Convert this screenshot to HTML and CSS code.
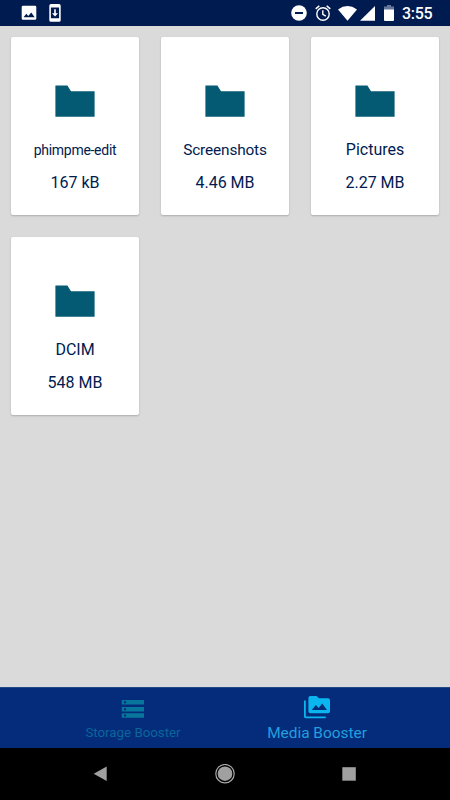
FILE: index.html
```html
<!DOCTYPE html>
<html lang="en">
<head>
<meta charset="utf-8">
<title>Media Booster</title>
<link rel="stylesheet" href="styles.css">
</head>
<body>
<svg class="defs" aria-hidden="true">
  <symbol id="folder" viewBox="0 0 40 32"><path d="M.4 .5H12.4L16 6.2H39.6V31.8H.4Z"/></symbol>
</svg>
<div class="screen">
  <header class="status">
    <div class="notifications">
      <svg width="16" height="16" viewBox="0 0 16 16"><path fill="#fff" fill-rule="evenodd" d="M2 .8H14Q15.3.8 15.3 2.1V13.5Q15.3 14.8 14 14.8H2Q.7 14.8.7 13.5V2.1Q.7.8 2 .8ZM2.6 12.2H13.7L10.2 7.5 7.3 11.1 5.3 8.8Z"/></svg>
      <svg width="12" height="18" viewBox="0 0 12 18"><path fill="#fff" fill-rule="evenodd" d="M2 0H10Q11.7 0 11.7 1.7V16.2Q11.7 17.8 10 17.8H2Q.3 17.8.3 16.2V1.7Q.3 0 2 0ZM1.9 3.5V14.3H10.1V3.5Z"/><path fill="#fff" d="M5.2 5.2H6.8V9.3H9L6 12.4 3 9.3H5.2Z"/></svg>
    </div>
    <div class="system">
      <svg class="dnd" width="16" height="16" viewBox="0 0 16 16"><circle cx="8" cy="8" r="7.8" fill="#fff"/><path d="M4 8H12" stroke="#001b50" stroke-width="2"/></svg>
      <svg class="alarm" width="16" height="17" viewBox="0 0 16 17" fill="none" stroke="#fff" stroke-width="1.4"><circle cx="8" cy="9" r="6.2"/><path d="M.7 3.9 4.3 .9M15.3 3.9 11.7 .9M7.8 5.3V9.4L10.8 11.2"/></svg>
      <svg class="wifi" width="19" height="15" viewBox="0 0 19 15"><path fill="#fff" d="M0 3.4Q9.5-3.3 19 3.4L9.5 14.8Z"/></svg>
      <svg class="signal" width="15" height="15" viewBox="0 0 15 15"><path fill="#fff" d="M15 0V14.8H0Z"/></svg>
      <svg class="battery" width="10" height="16" viewBox="0 0 10 16"><path fill="#65769a" d="M3 0H7V1.6H10V5H0V1.6H3Z"/><path fill="#fff" d="M0 4.5H10V15Q10 16 9 16H1Q0 16 0 15Z"/></svg>
      <span class="clock">3:55</span>
    </div>
  </header>
  <main class="grid">
    <article class="card"><svg class="folder"><use href="#folder"/></svg><h2 class="name name-long">phimpme-edit</h2><p class="size">167 kB</p></article>
    <article class="card"><svg class="folder"><use href="#folder"/></svg><h2 class="name name-medium">Screenshots</h2><p class="size">4.46 MB</p></article>
    <article class="card"><svg class="folder"><use href="#folder"/></svg><h2 class="name">Pictures</h2><p class="size">2.27 MB</p></article>
    <article class="card"><svg class="folder"><use href="#folder"/></svg><h2 class="name">DCIM</h2><p class="size">548 MB</p></article>
  </main>
  <nav class="tabs">
    <div class="tab storage">
      <svg width="24" height="20" viewBox="0 0 24 20"><path fill="currentColor" d="M.8 1H23V5.6H.8ZM.8 8H23V12.4H.8ZM.8 14.2H23V18.8H.8Z"/><path fill="#042c7a" d="M3 2.3H5V4.3H3ZM3 9.2H5V11.2H3ZM3 15.5H5V17.5H3Z"/></svg>
      <span>Storage Booster</span>
    </div>
    <div class="tab media">
      <svg width="28" height="24" viewBox="0 0 28 24"><path fill="none" stroke="currentColor" stroke-width="1.8" d="M1.9 4.5V20.5Q1.9 21.3 2.7 21.3H22.8"/><path fill="currentColor" fill-rule="evenodd" d="M7.4 0H13.5L16 2.2H25Q27 2.2 27 4.2V15.2Q27 17.2 25 17.2H7.4Q5.4 17.2 5.4 15.2V2Q5.4 0 7.4 0ZM8.8 14H24L19.2 7.6 15.7 12 12.8 8.9Z"/></svg>
      <span>Media Booster</span>
    </div>
  </nav>
  <footer class="navigation">
    <svg width="14" height="16" viewBox="0 0 14 16"><path fill="#a0a0a0" d="M13.7.5V15L.7 7.8Z"/></svg>
    <svg width="20" height="20" viewBox="0 0 20 20"><circle cx="10" cy="9.7" r="9.2" fill="none" stroke="#a8a8a8" stroke-width="1.2"/><circle cx="10" cy="9.7" r="7.3" fill="#a0a0a0"/></svg>
    <svg width="14" height="14" viewBox="0 0 14 14"><path fill="#a0a0a0" d="M.3.2H13.8V13.7H.3Z"/></svg>
  </footer>
</div>
</body>
</html>
```

FILE: styles.css
```css
* { box-sizing: border-box; }

body {
  margin: 0;
  font-family: Roboto, "Liberation Sans", sans-serif;
}

svg { display: block; flex: none; }

.defs { display: none; }

.screen {
  width: 450px;
  height: 800px;
  display: flex;
  flex-direction: column;
  background: #dadada;
}

.status {
  height: 26px;
  flex: none;
  display: flex;
  justify-content: space-between;
  background: #001b50;
  color: #fff;
}

.notifications {
  display: flex;
  align-items: center;
  gap: 12px;
  padding-left: 20.7px;
}

.system {
  display: flex;
  align-items: center;
  padding-right: 17px;
}

.alarm { margin-left: 8px; }
.wifi { margin-left: 7px; }
.signal { margin-left: 3px; }
.battery { margin-left: 9px; }

.clock {
  width: 31px;
  margin-left: 8px;
  padding-top: 2px;
  font-size: 16px;
  font-weight: 500;
  line-height: 20px;
  letter-spacing: -.3px;
  white-space: nowrap;
}

.grid {
  flex: 1;
  display: grid;
  grid-template-columns: repeat(3, 128px);
  grid-auto-rows: 178px;
  align-content: start;
  gap: 22px;
  padding: 11px;
}

.card {
  display: flex;
  flex-direction: column;
  align-items: center;
  padding-top: 48px;
  border-radius: 2px;
  background: #fff;
  box-shadow: 0 1px 2px rgba(0, 0, 0, .22);
  color: #001b50;
}

.folder {
  width: 40px;
  height: 32px;
  fill: #055a73;
}

.name,
.size {
  margin: 0;
  font-size: 16px;
  font-weight: 400;
  line-height: 20px;
  white-space: nowrap;
}

.name { margin-top: 23px; }
.name-long { font-size: 14px; letter-spacing: -.28px; }
.name-medium { font-size: 15.4px; letter-spacing: -.15px; }
.size { margin-top: 13px; }

.tabs {
  height: 61px;
  flex: none;
  display: flex;
  justify-content: center;
  gap: 16px;
  border-top: 1px solid #22488b;
  background: #042c7a;
}

.tab {
  width: 168px;
  display: flex;
  flex-direction: column;
  align-items: center;
  line-height: 18px;
  white-space: nowrap;
}

.storage {
  padding-top: 11px;
  color: #08759d;
  font-size: 13.3px;
}

.storage span { margin-top: 5px; color: #0b659b; }

.media {
  padding-top: 8px;
  color: #0bb5f0;
  font-size: 15.4px;
}

.media span { margin-top: 4px; color: #239fdf; }

.navigation {
  height: 52px;
  flex: none;
  display: flex;
  align-items: center;
  justify-content: space-between;
  padding: 0 94px 0 93px;
  background: #000;
}
```
